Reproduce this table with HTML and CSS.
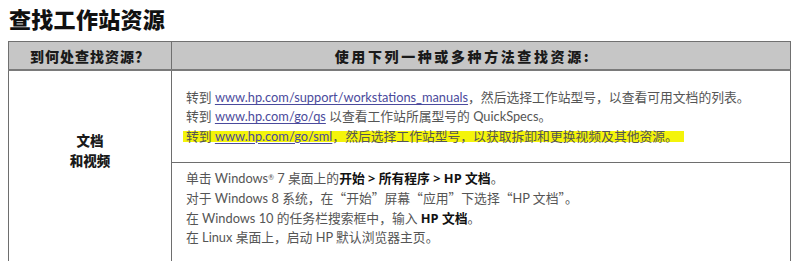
FILE: index.html
```html
<!DOCTYPE html>
<html lang="zh-CN">
<head>
<meta charset="utf-8">
<link rel="stylesheet" href="styles.css">
</head>
<body>
<h1 class="title">查找工作站资源</h1>
<table class="res">
  <thead>
    <tr>
      <th class="col-where">到何处查找资源？</th>
      <th class="col-how">使用下列一种或多种方法查找资源:</th>
    </tr>
  </thead>
  <tbody>
    <tr>
      <td class="where" rowspan="2"><div class="where-text">文档<br>和视频</div></td>
      <td class="how how-1">
        <p>转到 <a href="#">www.hp.com/support/workstations_manuals</a>，然后选择工作站型号，以查看可用文档的列表。</p>
        <p>转到 <a href="#">www.hp.com/go/qs</a> 以查看工作站所属型号的 QuickSpecs。</p>
        <p><span class="hl">转到 <a href="#">www.hp.com/go/sml</a>，然后选择工作站型号，以获取拆卸和更换视频及其他资源。</span></p>
      </td>
    </tr>
    <tr>
      <td class="how how-2">
        <p>单击 Windows<sup>®</sup> 7 桌面上的<b>开始 &gt; 所有程序 &gt; HP 文档</b>。</p>
        <p>对于 Windows 8 系统，在<span class="q">“</span>开始<span class="q">”</span>屏幕<span class="q">“</span>应用<span class="q">”</span>下选择<span class="q">“</span>HP 文档<span class="q">”</span>。</p>
        <p>在 Windows 10 的任务栏搜索框中，输入 <b>HP 文档</b>。</p>
        <p>在 Linux 桌面上，启动 HP 默认浏览器主页。</p>
      </td>
    </tr>
    <tr>
      <td class="where"></td>
      <td class="how how-3">
        <p>转到 www.hp.com/support，选择工作站型号，以获取支持信息和资源。</p>
      </td>
    </tr>
  </tbody>
</table>
</body>
</html>
```
FILE: styles.css
```css
html, body {
  margin: 0;
  padding: 0;
  background: #ffffff;
  overflow: hidden;
  height: 261px;
}
body {
  font-family: "Lato", "Noto Sans CJK SC", sans-serif;
  color: #555555;
}
.title {
  margin: 0;
  padding: 3px 0 0 9px;
  height: 38px;
  box-sizing: border-box;
  font-family: "Noto Sans CJK SC", sans-serif;
  font-size: 22px;
  font-weight: 900;
  line-height: 30px;
  color: #111;
  letter-spacing: 0.3px;
}
.res {
  margin-left: 8px;
  margin-top: 3px;
  width: 783px;
  border-collapse: collapse;
  table-layout: fixed;
}
.res th {
  background: #c6c6c6;
  height: 27px;
  padding: 0;
  font-family: "Noto Sans CJK SC", sans-serif;
  font-size: 14px;
  font-weight: 900;
  color: #1a1a1a;
  border: 1px solid #707070;
  border-bottom: 2px solid #7a7a7a;
  letter-spacing: 1px;
}
.res th.col-how {
  letter-spacing: 2.6px;
  padding-right: 36px;
}
.col-where { width: 162px; }
.res td {
  border: 1px solid #6e6e6e;
  vertical-align: top;
}
.where {
  text-align: center;
  vertical-align: middle !important;
  font-family: "Noto Sans CJK SC", sans-serif;
  font-weight: 900;
  font-size: 13.5px;
  color: #1a1a1a;
}
.where-text {
  line-height: 20px;
  padding-bottom: 34px;
}
.how {
  padding: 0 10px 0 14px;
  font-size: 12.8px;
  line-height: 19.3px;
}
.how p { margin: 0; white-space: nowrap; }
.how-1 { padding-top: 17px; height: 74px; }
.how-2 { padding-top: 5px; height: 94px; }
.how-3 { padding-top: 2px; height: 30px; }
.how a {
  color: #4a4a9c;
  text-decoration: underline;
  text-decoration-thickness: 1px;
  text-underline-offset: 2px;
}
.hl {
  background: linear-gradient(to bottom, transparent 20%, #f4f40a 20%, #f4f40a 90%, transparent 90%);
  padding: 0 6px 0 3px;
  margin-left: -3px;
}
.how b {
  font-weight: 700;
  color: #111;
  font-family: "Open Sans", "Noto Sans CJK SC", sans-serif;
}
.q {
  font-family: "Noto Sans CJK SC", sans-serif;
}
.how sup {
  font-size: 7px;
  vertical-align: 3px;
}
```
